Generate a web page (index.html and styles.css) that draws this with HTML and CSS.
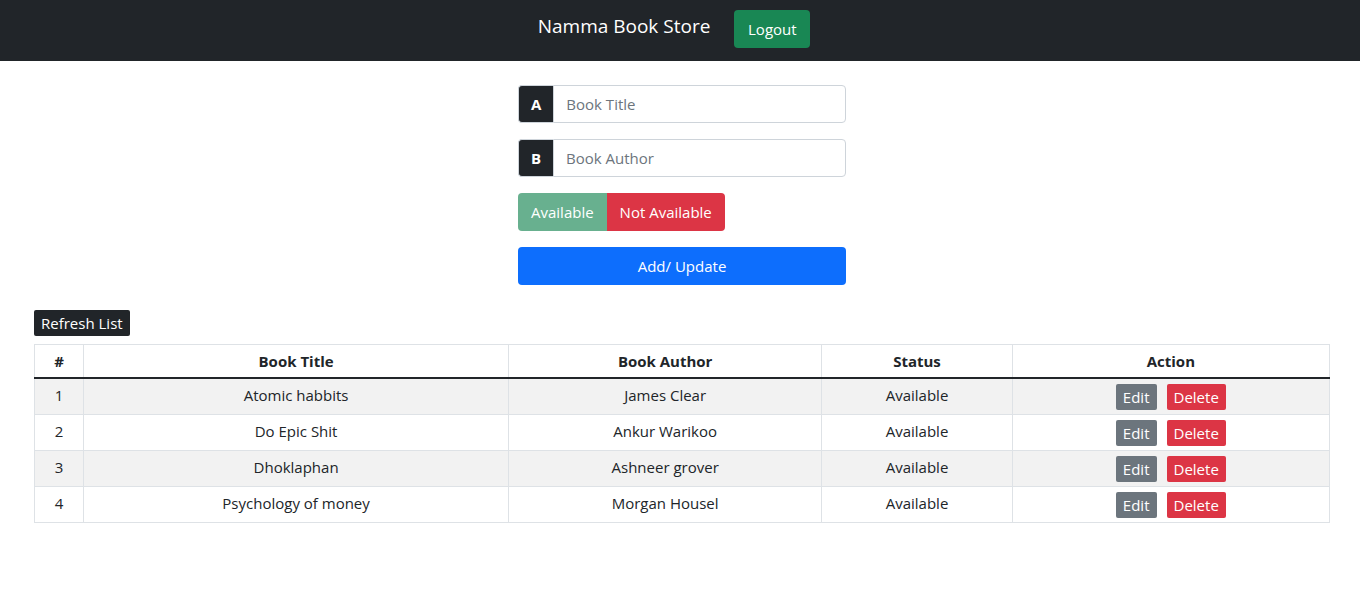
FILE: index.html
```html
<!DOCTYPE html>
<html lang="en">
<head>
<meta charset="utf-8">
<meta name="viewport" content="width=device-width, initial-scale=1">
<title>Namma Book Store</title>
<link rel="stylesheet" href="styles.css">
</head>
<body>
<header class="navbar">
  <a class="brand" href="#">Namma Book Store</a>
  <button class="btn btn-success btn-logout" type="button">Logout</button>
</header>
<main class="page">
  <form class="book-form">
    <div class="input-group">
      <label class="input-tag" for="title">A</label>
      <input class="input" id="title" type="text" placeholder="Book Title">
    </div>
    <div class="input-group">
      <label class="input-tag" for="author">B</label>
      <input class="input" id="author" type="text" placeholder="Book Author">
    </div>
    <div class="btn-group">
      <button class="btn btn-success btn-available" type="button" disabled>Available</button>
      <button class="btn btn-danger btn-unavailable" type="button">Not Available</button>
    </div>
    <button class="btn btn-primary" type="button">Add/ Update</button>
  </form>
  <section class="books">
    <button class="btn btn-small btn-dark" type="button">Refresh List</button>
    <table class="table">
      <colgroup>
        <col class="col-number"><col class="col-title"><col class="col-author"><col class="col-status"><col class="col-action">
      </colgroup>
      <thead>
        <tr><th scope="col">#</th><th scope="col">Book Title</th><th scope="col">Book Author</th><th scope="col">Status</th><th scope="col">Action</th></tr>
      </thead>
      <tbody>
        <tr><td>1</td><td>Atomic habbits</td><td>James Clear</td><td>Available</td>
          <td><div class="actions"><button class="btn btn-small btn-secondary" type="button">Edit</button><button class="btn btn-small btn-danger" type="button">Delete</button></div></td></tr>
        <tr><td>2</td><td>Do Epic Shit</td><td>Ankur Warikoo</td><td>Available</td>
          <td><div class="actions"><button class="btn btn-small btn-secondary" type="button">Edit</button><button class="btn btn-small btn-danger" type="button">Delete</button></div></td></tr>
        <tr><td>3</td><td>Dhoklaphan</td><td>Ashneer grover</td><td>Available</td>
          <td><div class="actions"><button class="btn btn-small btn-secondary" type="button">Edit</button><button class="btn btn-small btn-danger" type="button">Delete</button></div></td></tr>
        <tr><td>4</td><td>Psychology of money</td><td>Morgan Housel</td><td>Available</td>
          <td><div class="actions"><button class="btn btn-small btn-secondary" type="button">Edit</button><button class="btn btn-small btn-danger" type="button">Delete</button></div></td></tr>
      </tbody>
    </table>
  </section>
</main>
</body>
</html>
```
FILE: styles.css
```css
*, *::before, *::after { box-sizing: border-box; }

body {
  margin: 0;
  background: #fff;
  color: #212529;
  font-family: "Segoe UI", "Open Sans", "Noto Sans", sans-serif;
  font-size: 15px;
  line-height: 24px;
}

.navbar {
  display: flex;
  justify-content: center;
  align-items: flex-start;
  gap: 24px;
  padding: 10px 12px 13px 0;
  background: #212529;
}

.brand {
  color: #fff;
  font-size: 19px;
  line-height: 32px;
  text-decoration: none;
}

.btn {
  padding: 6px 12px;
  border: 1px solid transparent;
  border-radius: 4px;
  color: #fff;
  font: inherit;
  text-align: center;
  white-space: nowrap;
  cursor: pointer;
}

.btn-small {
  padding: 0 6px;
  border-radius: 2px;
}

.btn-success { background: #198754; }
.btn-danger { background: #dc3545; }
.btn-primary { background: #0d6efd; }
.btn-secondary { background: #6c757d; }
.btn-dark { background: #212529; }
.btn:disabled { opacity: 0.65; cursor: default; }

.btn-logout { min-width: 76px; }

.page { padding: 24px 30px 24px 34px; }

.book-form {
  display: flex;
  flex-direction: column;
  gap: 16px;
  max-width: 328px;
  margin: 0 auto 25px;
}

.input-group { display: flex; }

.input-tag {
  padding: 6px 12px;
  border: 1px solid #ced4da;
  border-right: 0;
  border-radius: 4px 0 0 4px;
  background: #212529;
  color: #fff;
  font-weight: 700;
}

.input {
  flex: 1;
  min-width: 0;
  padding: 6px 12px;
  border: 1px solid #ced4da;
  border-radius: 0 4px 4px 0;
  background: #fff;
  color: #212529;
  font: inherit;
}

.input::placeholder { color: #6c757d; opacity: 1; }

.btn-group { display: flex; }
.btn-available { border-radius: 4px 0 0 4px; }
.btn-unavailable { border-radius: 0 4px 4px 0; }

.books {
  display: flex;
  flex-direction: column;
  align-items: flex-start;
  gap: 8px;
}

.table {
  width: 100%;
  border-collapse: collapse;
  table-layout: fixed;
  text-align: center;
}

.col-number { width: 3.8%; }
.col-title { width: 32.8%; }
.col-author { width: 24.2%; }
.col-status { width: 14.7%; }
.col-action { width: 24.5%; }

.table th,
.table td {
  padding: 4px;
  border: 1px solid #dee2e6;
  vertical-align: top;
}

.table thead th { border-bottom: 2px solid #212529; }
.table tbody tr:nth-child(odd) { background: #f2f2f2; }

.actions {
  display: flex;
  justify-content: center;
  gap: 10px;
  padding-top: 1px;
}
```
